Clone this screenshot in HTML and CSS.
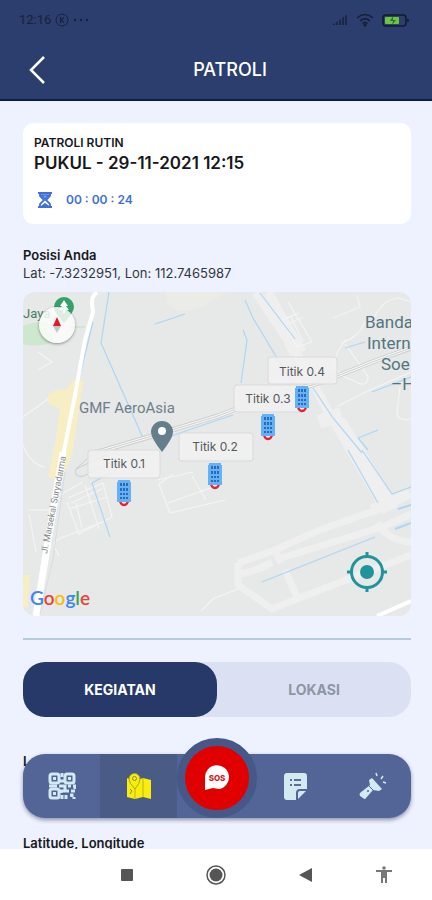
FILE: index.html
```
<!DOCTYPE html>
<html lang="id">
<head>
	<meta charset="UTF-8">
	<meta name="viewport" content="width=device-width, initial-scale=1">
	<title>Patroli</title>
	<link rel="stylesheet" href="styles.css">
</head>
<body>
	<header class="header">
		<div class="status">
			<span class="clock">12:16</span>
			<svg width="14" height="14" viewBox="0 0 14 14" fill="none" stroke="#17213f"><circle cx="7" cy="7" r="6"/><path d="M5.500 4v6M9 4.500 6 7l3 2.500" stroke-width="1.300"/></svg>
			<svg class="dots" width="16" height="4" viewBox="0 0 16 4" fill="#17213f"><circle cx="2" cy="2" r="1.200"/><circle cx="8" cy="2" r="1.200"/><circle cx="14" cy="2" r="1.200"/></svg>
			<svg class="signal" width="16" height="12" viewBox="0 0 16 12" fill="#1b2749"><path d="M0 11 3 9v2zM4 8.500l2-1.500v4H4zM7 6.500 9 5v6H7zM10 4l2-1.500V11h-2zM13 2l2-1.500V11h-2z"/></svg>
			<svg class="wifi" width="18" height="14" viewBox="0 0 18 14" fill="none" stroke="#141d3a" stroke-width="1.600"><path d="M1 5q8-7 16 0M4 8q5-4.500 10 0M6.500 10.500q2.500-2 5 0"/><circle cx="9" cy="12" r=".8"/></svg>
			<svg width="28" height="13" viewBox="0 0 28 13"><rect x="1" y="1" width="23" height="11" rx="3" fill="none" stroke="#111a35" stroke-width="1.600"/><path d="M26 5v3" stroke="#111a35" stroke-width="1.500"/><rect x="3" y="3" width="14" height="7" rx="1" fill="#69c839"/><path d="M11 2 8 7h3l-1 4 4-5h-3z" fill="#376b35"/></svg>
		</div>
		<div class="title_bar">
			<button class="back" type="button" aria-label="Kembali"><svg width="18" height="30" viewBox="0 0 18 30" fill="none" stroke="#fff" stroke-width="2.500"><path d="M16 2 3 15l13 13"/></svg></button>
			<h1>PATROLI</h1>
		</div>
	</header>

	<main class="main">
		<section class="card">
			<p class="kind">PATROLI RUTIN</p>
			<h2>PUKUL - 29-11-2021 12:15</h2>
			<div class="timer">
				<svg width="18" height="18" viewBox="0 0 18 18" fill="none" stroke="#3e70d8" stroke-width="1.500"><path d="M2 2h14M2 16h14M4 2v3l4 4-4 4v3M14 2v3l-4 4 4 4v3" stroke-width="1.800"/><path d="M5 4h8L9 8zM6 15l3-2 3 2z" fill="#7fa4ea"/></svg>
				<span>00 : 00 : 24</span>
			</div>
		</section>

		<section class="position">
			<h3>Posisi Anda</h3>
			<p>Lat: -7.3232951, Lon: 112.7465987</p>
		</section>

		<div class="map">
			<svg class="map_drawing" viewBox="0 0 388 324" preserveAspectRatio="xMidYMid slice">
				<defs>
					<g id="post">
						<path d="M-4 20a4 5 0 0 0 8 0z" fill="#f1e5e5" stroke="#e5232d" stroke-width="2.500"/>
						<path d="M-6 0H6v2h1v20H-7V2h1z" fill="#64b2f5"/>
						<path d="M-4 3h2v3h-2zM-1 3h2v3h-2zM2 3h2v3H2zM-4 8h2v3h-2zM-1 8h2v3h-2zM2 8h2v3H2zM-4 13h2v2h-2zM-1 13h2v2h-2zM2 13h2v2H2zM-4 17h2v2h-2zM-1 17h2v2h-2zM2 17h2v2H2z" fill="#2a6abb"/>
					</g>
				</defs>
				<rect width="388" height="324" fill="#e7e8e8"/>
				<!-- land -->
				<path d="M0 34q18-7 29-1l1 17q-16 6-30 2z" fill="#cde8cf"/>
				<path d="M48 34h14v2H46z" fill="#cde8cf"/>
				<path d="M50 88q9-2 10 3L49 163l-10 23H25l8-40 4-30q-13-2-13-11 8-10 19-7zM0 283h7l-2 32H0z" fill="#f7eec3"/>
				<path d="M142 0h62l-25 15q-25 9-35-4z" fill="#ebebe7"/>
				<!-- runways -->
				<g fill="none" stroke="#efefef" stroke-linejoin="round">
					<path d="m233 0 45 68 30 57 56 95" stroke-width="9"/>
					<path d="m245 0 34 60M318 128l54 88" stroke-width="9"/>
					<path d="m264 58 12-6M296 130l22-8" stroke-width="14"/>
					<path d="m215 271 37-13 45-20 65-23M255 267l107-33 26-12M215 271v22l34 24 30-12 109-42M252 259l6 12M262 278l12 27M217 282q20-4 32-12M354 231q12 18 34 19" stroke-width="7"/>
					<path d="m349 218 18-8 20-9" stroke-width="11"/>
				</g>
				<!-- small streets -->
				<g fill="none" stroke="#f4f4f4" stroke-width="1.200">
					<path d="m265 10 24 40-15 5-15-27 17-7M268 25l12 25M263 33l17-8M334 3l3 12-27 11M348 32q10-25 28-26l12 4M323 47l-8 12q-10 22 14 29 16 10 16-4l-23-32M342 30q-6 15-23 21M315 114l34-17 39-17M377 95l-3 24q0 11 14 8"/>
					<path d="M0 153q7 19 22 22M5 218h23M6 222l7 38M45 206l35-15 9 34-33 17-12-32M36 264l-4-8q-3-8 9-11l39-15M35 204l25-14M48 211l31-14M62 193l14 44M53 211l6 25M46 217l38-12M150 182l-14 10 11 29 55-13M145 211l45-16M169 184l14 24M178 319l12-12 25-10M135 188l35-8M0 125l25-18M15 60l14 10-14 8"/>
				</g>
				<!-- rivers -->
				<g fill="none" stroke="#acd6f5" stroke-width="1.200">
					<path d="m86 0-8 51 42 95M70 30 53 99 40 164M89 180l-20 11 18 54M132 32l30-10M222 8l8 18 39 65M290 96l20 30 29 35M237 1l35 46M220 38l4 10-6 43M322 56l20-6M349 100l39-15M335 146l20-8M335 146l10 12M325 158l30 53M339 158l30 44 19-7M239 290l113-45"/>
					<path d="m372 237 16-6M375 217l13-4" stroke-width="2"/>
					<path d="m145 145 47-16 18-6"/>
				</g>
				<!-- main road and railway -->
				<path d="M74 0q-6 5-5 12l1 8-8 28-10 55-12 61" fill="none" stroke="#fff" stroke-width="4"/>
				<path d="m40 160-12 71-15 93" fill="none" stroke="#fff" stroke-width="7"/>
				<path d="m42 180-12 87-13 55" fill="none" stroke="#d8dce0"/>
				<path d="m65 163 74-22 56-17 36-14 68-20 53-21 36-13" fill="none" stroke="#cbcccd" stroke-width="5"/>
				<path d="m65 163 74-22 56-17 36-14 68-20 53-21 36-13" fill="none" stroke="#f8f8f8" stroke-width="3"/>
				<path d="m65 163 74-22 56-17 36-14 68-20 53-21 36-13M85 162l-32 15q-3 9 8 7l16-9M68 163l-15 14" fill="none" stroke="#cbcccd"/>
				<path d="m354 324 34-15" stroke="#fff" stroke-width="4"/>
				<!-- places -->
				<path d="M31 15a10 10 0 0 1 20 0q0 5-10 16-10-11-10-16" fill="#34a168"/>
				<path d="m41 8 4 6h-2l3 4H36l3-4h-2zM40 18h2v3h-2z" fill="#fff"/>
				<text class="park" x="0" y="26">Jaya</text>
				<text class="place" x="56" y="121">GMF AeroAsia</text>
				<path d="M128 140a11 11 0 0 1 22 0q0 6-11 20-11-14-11-20" fill="#667d8b"/>
				<circle cx="139" cy="139" r="4" fill="#fff"/>
				<g class="airport"><text x="342" y="36">Banda</text><text x="344" y="57">Intern</text><text x="358" y="78">Soe</text><text x="368" y="98">–H</text></g>
				<text class="street" transform="translate(24 262) rotate(-79)">Jl. Marsekal Suryadarma</text>
				<!-- patrol points -->
				<g class="bubbles"><rect x="245" y="65" width="69" height="27" rx="3"/><rect x="211" y="93" width="71" height="27" rx="3"/><rect x="156" y="141" width="74" height="28" rx="3"/><rect x="65" y="158" width="72" height="28" rx="3"/></g>
				<g class="points"><text x="279" y="84">Titik 0.4</text><text x="245" y="111">Titik 0.3</text><text x="192" y="159">Titik 0.2</text><text x="101" y="176">Titik 0.1</text></g>
				<use href="#post" x="279" y="94"/><use href="#post" x="245" y="122"/><use href="#post" x="192" y="171"/><use href="#post" x="101" y="188"/>
			</svg>
			<button class="compass" type="button" aria-label="Kompas"><svg width="8" height="18" viewBox="0 0 8 18"><path d="m4 1 4 9H0z" fill="#e01b24"/><path d="m4 17 4-7H0z" fill="#c6c8c6"/></svg></button>
			<span class="google"><b class="g1">G</b><b class="g2">o</b><b class="g3">o</b><b class="g1">g</b><b class="g4">l</b><b class="g2">e</b></span>
			<button class="locate" type="button" aria-label="Lokasi saya"><svg width="42" height="42" viewBox="0 0 42 42" fill="none" stroke="#20949b" stroke-width="3"><circle cx="21" cy="21" r="15.500"/><path d="M21 1v6M21 35v6M1 21h6M35 21h6"/><circle cx="21" cy="21" r="7" fill="#20949b" stroke="none"/></svg></button>
		</div>

		<hr class="line">

		<div class="tabs">
			<button class="tab active" type="button">KEGIATAN</button>
			<button class="tab" type="button">LOKASI</button>
		</div>

		<div class="detail">
			<h3>Lokasi</h3>
			<h3>Latitude, Longitude</h3>
		</div>

		<nav class="menu">
			<a href="#scan" aria-label="Scan">
				<svg width="28" height="28" viewBox="0 0 28 28" fill="none" stroke="#d3eaf2" stroke-width="3"><rect x="2" y="2" width="9" height="9" rx="2"/><rect x="17" y="2" width="9" height="9" rx="2"/><rect x="2" y="17" width="9" height="9" rx="2"/><path d="M5 6.500h3M20 6.500h3M5 21.500h3M14 1v4M12 9h4M1 14h8M11 14h6v5h-4v2M20 14h3M25 14h2v3M18 19h3M23 19h4M14 23v4M18 23v4M22 23h2v2M26 25v2"/></svg>
			</a>
			<a class="current" href="#peta" aria-label="Peta">
				<svg width="26" height="27" viewBox="0 0 26 27"><path d="m1 5 8 3 8-3 8 2v19l-8-2-8 2-8-2z" fill="#f8ed0b"/><path d="M9 12v14M17 5v19" stroke="#b8b32c"/><path d="M3 6a5 5 0 0 1 11 0q0 4-5 10-6-6-6-10" fill="#f8ed0b" stroke="#a9a52c"/><circle cx="8.500" cy="5.500" r="2" fill="none" stroke="#8c8b35"/><path d="m4 21 2-3-2-2" fill="none" stroke="#8c8b35"/></svg>
			</a>
			<a class="sos" href="#sos" aria-label="SOS">
				<svg width="26" height="26" viewBox="0 0 26 26"><path d="M1 25V13A12 12 0 1 1 15 24l-6-1z" fill="#fff"/><text x="13" y="16" text-anchor="middle">SOS</text></svg>
			</a>
			<a href="#catatan" aria-label="Catatan">
				<svg width="24" height="27" viewBox="0 0 24 27"><path d="M3 0h17q3 0 3 3v13h-7q-4 0-4 4v7H3q-3 0-3-3V3q0-3 3-3" fill="#d3eaf2"/><path d="M14 26v-6q0-2 2-2h6z" fill="#d3eaf2"/><path d="M6 7h2M10 7h7M6 12h2M10 12h7" stroke="#5b6f97" stroke-width="2"/></svg>
			</a>
			<a href="#senter" aria-label="Senter">
				<svg width="28" height="28" viewBox="0 0 28 28" fill="#d3eaf2"><path d="m13 6 10 11-3 2-6-1-7 8q-1 2-3 0l-3-2q-1-2 0-3l10-8-1-5z"/><path d="m10 14 5 5" stroke="#53669a"/><circle cx="9" cy="19" r="1" fill="#53669a"/><path d="m17 1 1 3M24 4l-2 3M24 10l3 1" stroke="#d3eaf2" stroke-width="1.500"/></svg>
			</a>
		</nav>
	</main>

	<footer class="system">
		<button type="button" aria-label="Aplikasi terbaru"><svg width="14" height="14" viewBox="0 0 14 14"><rect x="1" y="1" width="12" height="12" rx="1" fill="#555"/></svg></button>
		<button type="button" aria-label="Beranda"><svg width="20" height="20" viewBox="0 0 20 20"><circle cx="10" cy="10" r="9" fill="none" stroke="#555" stroke-width="1.500"/><circle cx="10" cy="10" r="6.500" fill="#555"/></svg></button>
		<button type="button" aria-label="Kembali"><svg width="14" height="16" viewBox="0 0 14 16"><path d="M0 8 13 1v14z" fill="#555"/></svg></button>
		<button type="button" aria-label="Aksesibilitas"><svg width="16" height="18" viewBox="0 0 16 18" fill="#777"><circle cx="8" cy="2" r="1.800"/><path d="M0 4h16v2h-5v11H9v-5H7v5H5V6H0z"/></svg></button>
	</footer>
</body>
</html>
```
FILE: styles.css
```
*{
	margin:0;
	padding:0;
	box-sizing:border-box;
}

body{
	height:100vh;
	display:flex;
	flex-direction:column;
	overflow:hidden;
	background-color:#eef2ff;
	color:#17181c;
	font-family:Inter, "Open Sans", sans-serif;
}

button{
	border:0;
	background:none;
	font-family:inherit;
	cursor:pointer;
}

svg{
	display:block;
}

.header{
	background-color:#2b3e6d;
	border-bottom:2px solid #0d1a50;
	color:#fff;
}

.status{
	height:40px;
	padding:0 22px 0 19px;
	display:flex;
	align-items:center;
	gap:4px;
}

.clock{
	color:#17213f;
	font:13px/16px Roboto, sans-serif;
}

.signal{
	margin-left:auto;
}

.wifi{
	margin:0 4px;
}

.title_bar{
	height:59px;
	display:grid;
	grid-template-columns:1fr auto 1fr;
	align-items:center;
	padding-left:28px;
}

.title_bar h1{
	font-size:18px;
	line-height:24px;
	font-weight:500;
}

.back{
	justify-self:start;
}

.main{
	flex:1;
	min-height:0;
	position:relative;
	overflow:hidden;
	padding:22px 21px 0 23px;
}

.card{
	padding:12px 11px 11px;
	border-radius:10px;
	background-color:#fff;
}

.kind{
	font-size:12px;
	line-height:16px;
	font-weight:600;
}

.card h2{
	font-size:17px;
	line-height:24px;
	font-weight:600;
}

.timer{
	display:flex;
	align-items:center;
	gap:12px;
	margin-top:12px;
	padding-left:2px;
	height:26px;
	color:#3e70d8;
	font-size:12px;
	line-height:16px;
	font-weight:600;
}

.position{
	margin:22px 0 10px;
}

.position h3,.detail h3{
	font-size:13px;
	line-height:18px;
	font-weight:600;
}

.position p{
	font-size:13px;
	line-height:18px;
	color:#34363c;
}

.map{
	position:relative;
	overflow:hidden;
	border-radius:12px;
}

.map_drawing{
	width:100%;
	height:auto;
}

.place,.airport{
	font-family:Roboto, sans-serif;
	font-size:15px;
	fill:#6c7f89;
}

.airport{
	font-size:17px;
	fill:#527681;
}

.park{
	font:13px Roboto, sans-serif;
	fill:#467d60;
}

.street{
	font:9px Roboto, sans-serif;
	fill:#84888b;
}

.bubbles{
	fill:#f1f1f1;
	fill-opacity:.85;
	stroke:#dadada;
}

.points{
	font-size:12px;
	text-anchor:middle;
	fill:#55585c;
}

/* controls lying over the map */
.compass,.locate,.google{
	position:absolute;
}

.compass{
	left:16px;
	top:15px;
	width:36px;
	height:36px;
	display:flex;
	align-items:center;
	justify-content:center;
	border-radius:50%;
	background-color:rgba(250,252,250,.85);
	box-shadow:0 1px 3px rgba(0,0,0,.4);
}

.locate{
	right:23px;
	bottom:23px;
}

.google{
	left:7px;
	bottom:6px;
	font:19px/24px Lato, sans-serif;
}

.google b{
	font-weight:600;
}

.g1{
	color:#4285f4;
}

.g2{
	color:#ea4335;
}

.g3{
	color:#fbbc05;
}

.g4{
	color:#34a853;
}

.line{
	margin-top:22px;
	border:0;
	border-top:2px solid #b7cbdc;
}

.tabs{
	display:flex;
	margin-top:22px;
	border-radius:22px;
	background-color:#dbe1f2;
}

.tab{
	flex:1;
	height:55px;
	border-radius:22px;
	color:#8e95a4;
	font-size:14px;
	line-height:18px;
	font-weight:700;
}

.tab.active{
	background-color:#263969;
	color:#fff;
}

.detail{
	display:grid;
	gap:64px;
	margin-top:35px;
}

.menu{
	position:absolute;
	left:23px;
	right:21px;
	bottom:31px;
	height:64px;
	display:grid;
	grid-template-columns:repeat(5, 1fr);
	border-radius:22px;
	background-color:#536496;
	box-shadow:0 2px 4px rgba(20,30,70,.45);
}

.menu a{
	display:flex;
	align-items:center;
	justify-content:center;
}

.menu .current{
	background-color:#4a5b85;
}

.menu .sos{
	width:80px;
	height:80px;
	align-self:center;
	justify-self:center;
	margin-top:-16px;
	border:8px solid #465887;
	border-radius:50%;
	background-color:#e10000;
}

.sos text{
	font-size:8px;
	font-weight:800;
	fill:#d01c25;
}

.system{
	height:51px;
	display:grid;
	grid-template-columns:4fr 4fr 4fr 3fr;
	align-items:center;
	padding:0 14px 0 82px;
	background-color:#fff;
}

.system button{
	display:flex;
	justify-content:center;
}
```
